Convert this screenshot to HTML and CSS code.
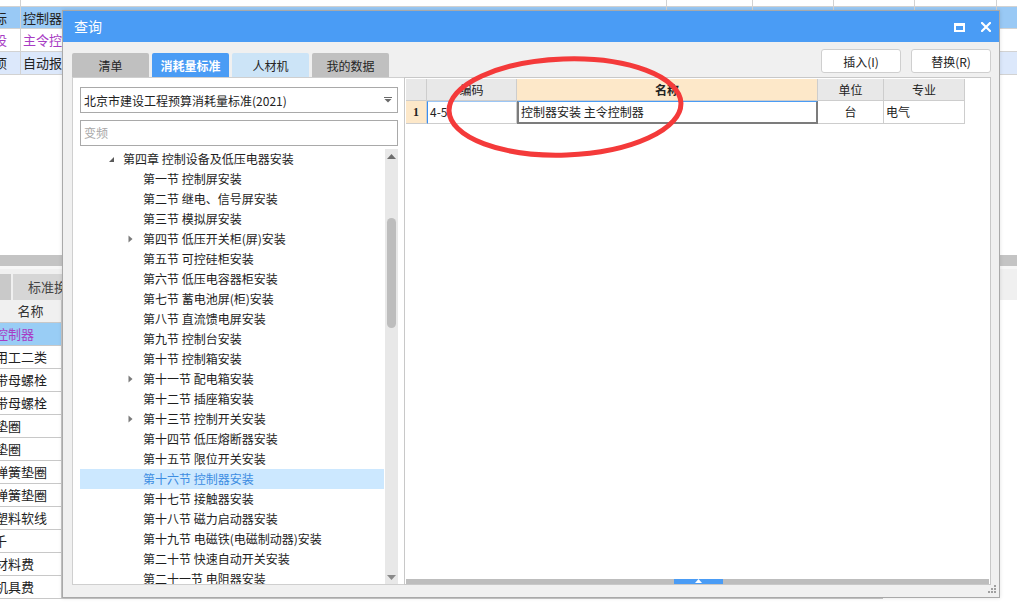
FILE: index.html
```html
<!DOCTYPE html>
<html lang="zh">
<head>
<meta charset="utf-8">
<title>查询</title>
<link rel="stylesheet" href="styles.css">
</head>
<body>
<div class="app">
  <div class="top-grid">
    <div class="c"></div><div class="c"></div><div class="c"></div><div class="c"></div><div class="c"></div><div class="c"></div><div class="c"></div>
    <div class="c r-sel"><span class="cut">指标</span></div><div class="c r-sel pad">控制器安装</div><div class="c r-sel"></div><div class="c r-sel"></div><div class="c r-sel"></div><div class="c r-sel"></div><div class="c r-sel"></div>
    <div class="c purple"><span class="cut">建设</span></div><div class="c purple pad">主令控制器</div><div class="c"></div><div class="c"></div><div class="c"></div><div class="c"></div><div class="c"></div>
    <div class="c r-alt"><span class="cut">事项</span></div><div class="c r-alt pad">自动报警系统</div><div class="c r-alt"></div><div class="c r-alt"></div><div class="c r-alt"></div><div class="c r-alt"></div><div class="c r-alt"></div>
  </div>
  <div class="gap-area"></div>
  <div class="bar"></div>
  <div class="tabstrip">
    <div class="bt bt-a"></div>
    <div class="bt bt-b">标准换算</div>
  </div>
  <div class="bottom">
    <div class="names">
      <div class="n head">名称</div>
      <div class="n sel"><span class="cut2">控制器</span></div>
      <div class="n"><span class="cut2">用工二类</span></div>
      <div class="n"><span class="cut2">带母螺栓</span></div>
      <div class="n"><span class="cut2">带母螺栓</span></div>
      <div class="n"><span class="cut2">垫圈</span></div>
      <div class="n"><span class="cut2">垫圈</span></div>
      <div class="n"><span class="cut2">弹簧垫圈</span></div>
      <div class="n"><span class="cut2">弹簧垫圈</span></div>
      <div class="n"><span class="cut2">塑料软线</span></div>
      <div class="n"><span class="cut3">千</span></div>
      <div class="n"><span class="cut2">材料费</span></div>
      <div class="n"><span class="cut2">机具费</span></div>
    </div>
    <div class="col w31"></div><div class="col w75"></div><div class="col w46"></div><div class="col w50"></div><div class="col w49"></div>
    <div class="col w57"></div><div class="col w57"></div><div class="col w57"></div><div class="col w57"></div><div class="col w57"></div>
    <div class="col w57"></div><div class="col w57"></div><div class="col w57"></div><div class="col w57"></div><div class="col w57"></div>
  </div>
</div>

<div class="dialog">
  <div class="titlebar">
    <span class="title">查询</span>
    <span class="tb-icons">
      <svg class="ic-max" width="11" height="9" viewBox="0 0 11 9"><rect x="1" y="1" width="9" height="7" fill="none" stroke="#fff" stroke-width="2"/><rect x="0" y="0" width="11" height="3" fill="#fff"/></svg>
      <svg class="ic-close" width="10" height="10" viewBox="0 0 10 10"><path d="M1 1 L9 9 M9 1 L1 9" stroke="#fff" stroke-width="2.2" stroke-linecap="square"/></svg>
    </span>
  </div>
  <div class="dbody">
    <div class="lcol">
      <div class="tabs">
        <div class="tab gray">清单</div>
        <div class="tab active">消耗量标准</div>
        <div class="tab light">人材机</div>
        <div class="tab gray">我的数据</div>
      </div>
      <div class="lpanel">
        <div class="select">
          <span>北京市建设工程预算消耗量标准(2021)</span>
          <svg class="dd" width="8" height="6" viewBox="0 0 8 6"><rect x="0" y="0" width="8" height="1" fill="#6a6a6a"/><path d="M0.5 2 L7.5 2 L4 5.5 Z" fill="#6a6a6a"/></svg>
        </div>
        <div class="search">变频</div>
        <div class="tree">
          <div class="list">
            <div class="row ch"><span class="exp"><svg width="7" height="7" viewBox="0 0 7 7"><path d="M6 1 L6 6 L1 6 Z" fill="#5a5a5a"/></svg></span>第四章 控制设备及低压电器安装</div>
            <div class="row sec"><span class="exp"></span>第一节 控制屏安装</div>
            <div class="row sec"><span class="exp"></span>第二节 继电、信号屏安装</div>
            <div class="row sec"><span class="exp"></span>第三节 模拟屏安装</div>
            <div class="row sec"><span class="exp"><svg width="5" height="8" viewBox="0 0 5 8"><path d="M0.5 0.5 L4.5 4 L0.5 7.5 Z" fill="#7a7a7a"/></svg></span>第四节 低压开关柜(屏)安装</div>
            <div class="row sec"><span class="exp"></span>第五节 可控硅柜安装</div>
            <div class="row sec"><span class="exp"></span>第六节 低压电容器柜安装</div>
            <div class="row sec"><span class="exp"></span>第七节 蓄电池屏(柜)安装</div>
            <div class="row sec"><span class="exp"></span>第八节 直流馈电屏安装</div>
            <div class="row sec"><span class="exp"></span>第九节 控制台安装</div>
            <div class="row sec"><span class="exp"></span>第十节 控制箱安装</div>
            <div class="row sec"><span class="exp"><svg width="5" height="8" viewBox="0 0 5 8"><path d="M0.5 0.5 L4.5 4 L0.5 7.5 Z" fill="#7a7a7a"/></svg></span>第十一节 配电箱安装</div>
            <div class="row sec"><span class="exp"></span>第十二节 插座箱安装</div>
            <div class="row sec"><span class="exp"><svg width="5" height="8" viewBox="0 0 5 8"><path d="M0.5 0.5 L4.5 4 L0.5 7.5 Z" fill="#7a7a7a"/></svg></span>第十三节 控制开关安装</div>
            <div class="row sec"><span class="exp"></span>第十四节 低压熔断器安装</div>
            <div class="row sec"><span class="exp"></span>第十五节 限位开关安装</div>
            <div class="row sec selected"><span class="exp"></span>第十六节 控制器安装</div>
            <div class="row sec"><span class="exp"></span>第十七节 接触器安装</div>
            <div class="row sec"><span class="exp"></span>第十八节 磁力启动器安装</div>
            <div class="row sec"><span class="exp"></span>第十九节 电磁铁(电磁制动器)安装</div>
            <div class="row sec"><span class="exp"></span>第二十节 快速自动开关安装</div>
            <div class="row sec"><span class="exp"></span>第二十一节 电阻器安装</div>
          </div>
          <div class="vscroll">
            <div class="arrow"><svg width="9" height="5" viewBox="0 0 9 5"><path d="M0 5 L4.5 0 L9 5 Z" fill="#6e6e6e"/></svg></div>
            <div class="thumb"></div>
            <div class="fill"></div>
            <div class="arrow"><svg width="9" height="5" viewBox="0 0 9 5"><path d="M0 0 L9 0 L4.5 5 Z" fill="#8a8a8a"/></svg></div>
          </div>
        </div>
      </div>
    </div>
    <div class="rcol">
      <div class="btns">
        <div class="btn">插入(I)</div>
        <div class="btn">替换(R)</div>
      </div>
      <div class="rpanel">
        <div class="grid">
          <div class="h">&nbsp;</div>
          <div class="h">编码</div>
          <div class="h name">名称</div>
          <div class="h">单位</div>
          <div class="h">专业</div>
          <div class="d rn">1</div>
          <div class="d code">4-5</div>
          <div class="d nm">控制器安装 主令控制器</div>
          <div class="d ctr">台</div>
          <div class="d">电气</div>
        </div>
        <div class="hscroll">
          <div class="hthumb"><svg width="7" height="4" viewBox="0 0 7 4"><path d="M0 4 L3.5 0 L7 4 Z" fill="#fff"/></svg></div>
        </div>
      </div>
    </div>
  </div>
  <div class="dfoot">
    <svg width="9" height="9" viewBox="0 0 9 9" fill="#a0a0a0"><rect x="6" y="0" width="2" height="2"/><rect x="3" y="3" width="2" height="2"/><rect x="6" y="3" width="2" height="2"/><rect x="0" y="6" width="2" height="2"/><rect x="3" y="6" width="2" height="2"/><rect x="6" y="6" width="2" height="2"/></svg>
  </div>
</div>

<svg class="mark" width="260" height="115" viewBox="0 0 260 115"><ellipse cx="125" cy="57" rx="116" ry="48" fill="none" stroke="#f43a3a" stroke-width="5" transform="rotate(-2 125 57)"/></svg>
</body>
</html>
```

FILE: styles.css
```css
* { box-sizing: border-box; margin: 0; padding: 0; }

body {
  width: 1017px;
  height: 611px;
  overflow: hidden;
  background: #fff;
  font-family: "Noto Sans CJK SC", "Noto Sans", sans-serif;
  font-size: 12px;
  color: #222;
  position: relative;
}

/* ---------- background application ---------- */
.app { width: 1017px; }

.top-grid {
  display: grid;
  grid-template-columns: 21px 646px 86px 81px 81px 82px 40px;
  grid-template-rows: 7px 22px 23px 23px;
}
.c {
  border-right: 1px solid #d2d2d2;
  border-bottom: 1px solid #d2d2d2;
  overflow: hidden;
  white-space: nowrap;
  font-size: 13px;
  line-height: 21px;
}
.c.pad { padding-left: 2px; }
.cut { display: inline-block; margin-left: -19px; }
.r-sel { background: #99c9f5; }
.r-alt { background: #dce8fb; }
.purple { color: #a83cc4; }

.gap-area { height: 180px; }
.bar { height: 11px; background: #c4c4c4; }
.tabstrip {
  height: 34px;
  background: #f0f0f0;
  display: flex;
  gap: 2px;
  padding-top: 5px;
  border-top: 3px solid #f7f7f7;
}
.bt { background: #c9c9c9; height: 26px; }
.bt-a { width: 11px; }
.bt-b {
  width: 70px;
  background: #d6d6d6;
  padding-left: 15px;
  line-height: 26px;
  font-size: 13px;
  color: #444;
  white-space: nowrap;
  overflow: hidden;
}

.bottom { display: flex; height: 300px; }
.names { width: 62px; }
.n {
  height: 23px;
  border-right: 1px solid #c8c8c8;
  border-bottom: 1px solid #c8c8c8;
  font-size: 13px;
  line-height: 22px;
  white-space: nowrap;
  overflow: hidden;
}
.n.head { background: #f0f0f0; text-align: center; color: #333; }
.n.sel { background: #99cdf5; color: #a83cc4; }
.cut2 { display: inline-block; margin-left: -5px; }
.cut3 { display: inline-block; margin-left: -6px; }
.col { height: 299px; border-right: 1px solid #c8c8c8; border-bottom: 1px solid #c8c8c8; }
.w31 { width: 31px; } .w75 { width: 75px; } .w46 { width: 46px; }
.w50 { width: 50px; } .w49 { width: 49px; } .w57 { width: 57px; }

/* ---------- dialog window ---------- */
.dialog {
  position: absolute;
  left: 62px;
  top: 10px;
  width: 938px;
  height: 588px;
  background: #f0f0f0;
  border: 1px solid #a9a9a9;
  display: flex;
  flex-direction: column;
  box-shadow: 0 0 4px rgba(0, 0, 0, 0.12);
}
.titlebar {
  height: 31px;
  background: #4a9cf5;
  display: flex;
  align-items: center;
  padding: 0 8px 0 11px;
  color: #fff;
  font-size: 14px;
}
.title { line-height: 31px; }
.tb-icons { margin-left: auto; display: flex; align-items: center; gap: 16px; }
.ic-max { margin-top: 1px; }

.dbody { display: flex; padding: 0 8px 0 9px; height: 543px; }
.lcol { width: 332px; margin-top: 11px; }
.rcol { width: 587px; margin-top: 7px; }

.tabs { display: flex; gap: 3px; height: 24px; }
.tab {
  width: 77px;
  height: 24px;
  display: flex;
  align-items: center;
  justify-content: center;
  font-size: 12px;
  border-radius: 2px 2px 0 0;
  color: #262626;
}
.tab.gray { background: #c0c0c0; }
.tab.light { background: #cce4f7; }
.tab.active { background: #4a9cf5; color: #fff; font-weight: bold; }

.lpanel {
  height: 508px;
  background: #fff;
  border: 1px solid #cfcfcf;
  border-right: none;
  padding: 9px 6px 0 7px;
}
.select {
  height: 26px;
  border: 1px solid #a9a9a9;
  display: flex;
  align-items: center;
  padding: 0 5px 0 3px;
  white-space: nowrap;
}
.select .dd { margin-left: auto; }
.search {
  margin-top: 7px;
  height: 26px;
  border: 1px solid #a9a9a9;
  padding-left: 3px;
  line-height: 24px;
  color: #a8a8a8;
}
.tree { margin-top: 3px; height: 435px; display: flex; }
.list { width: 304px; overflow: hidden; }
.row {
  height: 20px;
  line-height: 20px;
  white-space: nowrap;
  display: flex;
  align-items: center;
  color: #1e1e1e;
}
.row .exp { width: 15px; height: 20px; display: inline-flex; align-items: center; flex: none; }
.row.ch { padding-left: 28px; }
.row.sec { padding-left: 48px; }
.row.selected { background: #cce8ff; color: #3d8de2; }

.vscroll {
  width: 13px;
  margin-left: 1px;
  background: #e8e8e8;
  display: flex;
  flex-direction: column;
  align-items: center;
}
.arrow { height: 14px; display: flex; align-items: center; justify-content: center; }
.thumb { margin-top: 55px; width: 9px; height: 110px; background: #bdbdbd; border-radius: 5px; }
.fill { flex: 1; }

.btns { display: flex; justify-content: flex-end; gap: 10px; height: 24px; margin-bottom: 4px; }
.btn {
  width: 80px;
  height: 24px;
  background: #fff;
  border: 1px solid #cfcfcf;
  border-radius: 3px;
  display: flex;
  align-items: center;
  justify-content: center;
  color: #222;
}

.rpanel {
  height: 508px;
  background: #fff;
  border: 1px solid #c8c8c8;
  padding: 1px 1px 0 1px;
  display: flex;
  flex-direction: column;
}
.grid {
  display: grid;
  grid-template-columns: 21px 90px 301px 66px 81px;
  grid-template-rows: 22px 23px;
}
.h {
  background: #e8e8e8;
  border-right: 1px solid #cdcdcd;
  border-bottom: 1px solid #cdcdcd;
  text-align: center;
  line-height: 21px;
  color: #222;
}
.h.name { background: #fde8c9; font-weight: bold; }
.d {
  border-right: 1px solid #cdcdcd;
  border-bottom: 1px solid #cdcdcd;
  line-height: 22px;
  padding-left: 2px;
  white-space: nowrap;
  overflow: hidden;
}
.d.rn {
  background: #fde8c9;
  font-family: "Liberation Serif", serif;
  font-weight: bold;
  text-align: center;
  padding-left: 0;
}
.d.code { border-left: 1px solid #3b8ff0; border-top: 1px solid #9cc6f5; line-height: 20px; }
.d.nm { border: 2px solid #7c7c7c; border-top: 1px solid #4a9cf5; line-height: 20px; }
.d.ctr { text-align: center; padding-left: 0; }

.hscroll { margin-top: auto; height: 5px; background: #bdbdbd; display: flex; }
.hthumb {
  margin-left: 268px;
  width: 49px;
  height: 5px;
  background: #4a9cf5;
  display: flex;
  justify-content: center;
  align-items: flex-end;
}
.hthumb svg { margin-bottom: 1px; }

.dfoot { height: 12px; display: flex; justify-content: flex-end; align-items: flex-start; padding-right: 2px; }

/* annotation overlay */
.mark { position: absolute; left: 440px; top: 50px; }
```
